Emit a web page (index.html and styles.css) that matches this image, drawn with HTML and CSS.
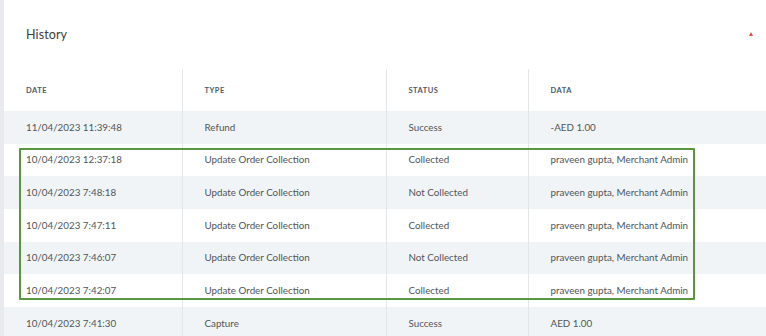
FILE: index.html
```html
<!DOCTYPE html>
<html>
<head>
<meta charset="utf-8">
<link rel="stylesheet" href="styles.css">
</head>
<body>
<div class="panel">
  <div class="panel-head">
    <h2 class="title">History</h2>
    <span class="toggle"></span>
  </div>
  <div class="table-wrap">
    <table class="history">
      <thead>
        <tr><th class="c1">DATE</th><th class="c2">TYPE</th><th class="c3">STATUS</th><th class="c4">DATA</th></tr>
      </thead>
      <tbody>
        <tr class="alt"><td>11/04/2023 11:39:48</td><td>Refund</td><td>Success</td><td>-AED 1.00</td></tr>
        <tr><td>10/04/2023 12:37:18</td><td>Update Order Collection</td><td>Collected</td><td>praveen gupta, Merchant Admin</td></tr>
        <tr class="alt"><td>10/04/2023 7:48:18</td><td>Update Order Collection</td><td>Not Collected</td><td>praveen gupta, Merchant Admin</td></tr>
        <tr><td>10/04/2023 7:47:11</td><td>Update Order Collection</td><td>Collected</td><td>praveen gupta, Merchant Admin</td></tr>
        <tr class="alt"><td>10/04/2023 7:46:07</td><td>Update Order Collection</td><td>Not Collected</td><td>praveen gupta, Merchant Admin</td></tr>
        <tr><td>10/04/2023 7:42:07</td><td>Update Order Collection</td><td>Collected</td><td>praveen gupta, Merchant Admin</td></tr>
        <tr class="alt"><td>10/04/2023 7:41:30</td><td>Capture</td><td>Success</td><td>AED 1.00</td></tr>
      </tbody>
    </table>
    <div class="highlight"></div>
  </div>
</div>
</body>
</html>
```
FILE: styles.css
```css
html, body {
  margin: 0;
  padding: 0;
  height: 100%;
  overflow: hidden;
}
body {
  background: #e8eaed;
  font-family: "Lato", "Open Sans", sans-serif;
  color: #505559;
}
.panel {
  margin-left: 4px;
  background: #fff;
  min-height: 100%;
}
.panel-head {
  height: 69px;
  display: flex;
  align-items: center;
  justify-content: space-between;
  padding: 0 13px 0 22px;
  box-sizing: border-box;
}
.title {
  margin: 0 0 1px;
  font-size: 12.5px;
  font-weight: 400;
  color: #3a3e42;
  letter-spacing: 0.1px;
}
.toggle {
  width: 0;
  height: 0;
  border-left: 2.5px solid transparent;
  border-right: 2.5px solid transparent;
  border-bottom: 4px solid #f0433a;
  margin-bottom: 1px;
}
.table-wrap {
  position: relative;
}
.history {
  width: 100%;
  border-collapse: collapse;
  table-layout: fixed;
}
.history th, .history td {
  text-align: left;
  padding: 0 0 0 22px;
  border-left: 1px solid #e3e7eb;
  white-space: nowrap;
}
.history th:first-child, .history td:first-child {
  border-left: none;
}
.c1 { width: 155.5px; }
.c2 { width: 181px; }
.c3 { width: 119px; }
.history th {
  height: 41px;
  font-size: 7.5px;
  font-weight: 700;
  letter-spacing: 0.5px;
  color: #4e5866;
  padding-top: 1px;
}
.history td {
  height: 31.65px;
  font-size: 9.8px;
  color: #505458;
  padding-bottom: 1px;
}
.history tr.alt td {
  background: #f1f4f7;
}
.highlight {
  position: absolute;
  left: 15px;
  top: 79px;
  width: 672px;
  height: 148px;
  border: 2px solid #5a963f;
  border-radius: 1px;
  pointer-events: none;
}
```
